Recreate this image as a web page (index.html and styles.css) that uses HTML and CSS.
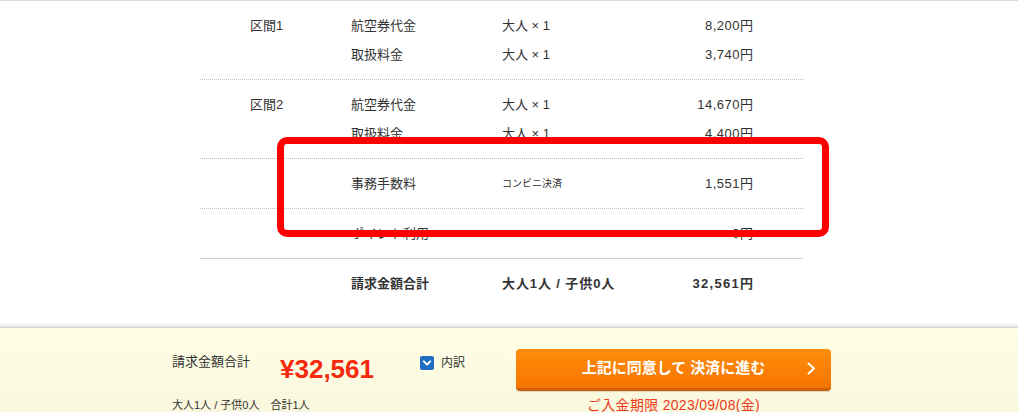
FILE: index.html
```html
<!DOCTYPE html>
<html lang="ja">
<head>
<meta charset="utf-8">
<title>お支払い内容</title>
<link rel="stylesheet" href="styles.css">
</head>
<body>
<main class="content">
  <div class="breakdown">
    <div class="group">
      <div class="row"><span class="sec">区間1</span><span>航空券代金</span><span>大人 × 1</span><span class="price">8,200円</span></div>
      <div class="row"><span class="sec"></span><span>取扱料金</span><span>大人 × 1</span><span class="price">3,740円</span></div>
    </div>
    <div class="group">
      <div class="row"><span class="sec">区間2</span><span>航空券代金</span><span>大人 × 1</span><span class="price">14,670円</span></div>
      <div class="row"><span class="sec"></span><span>取扱料金</span><span>大人 × 1</span><span class="price">4,400円</span></div>
    </div>
    <div class="group">
      <div class="row"><span class="sec"></span><span>事務手数料</span><span class="small">コンビニ決済</span><span class="price">1,551円</span></div>
    </div>
    <div class="group solid">
      <div class="row"><span class="sec"></span><span>ポイント利用</span><span></span><span class="price">0円</span></div>
    </div>
    <div class="group total">
      <div class="row"><span class="sec"></span><span>請求金額合計</span><span class="wide">大人1人 / 子供0人</span><span class="price">32,561円</span></div>
    </div>
  </div>
  <div class="highlight"></div>
</main>
<footer class="footer">
  <div class="footer-inner">
    <div class="summary">
      <div class="summary-row">
        <span class="sum-label">請求金額合計</span>
        <span class="sum-price">¥32,561</span>
        <span class="toggle">
          <svg class="check" width="14" height="14" viewBox="0 0 14 14"><rect x="0" y="0" width="14" height="14" rx="2" fill="#1f6ec2"/><path d="M3.8 5.4 L7 8.6 L10.2 5.4" fill="none" stroke="#fff" stroke-width="2" stroke-linecap="round" stroke-linejoin="round"/></svg>
          <span class="toggle-label">内訳</span>
        </span>
      </div>
      <div class="sum-sub">大人1人 / 子供0人　合計1人</div>
    </div>
    <div class="action">
      <button class="cta" type="button">上記に同意して 決済に進む
        <svg class="cta-arrow" width="9" height="13" viewBox="0 0 9 13"><path d="M1.5 1.5 L7 6.5 L1.5 11.5" fill="none" stroke="#fff" stroke-width="2" stroke-linecap="round" stroke-linejoin="round"/></svg>
      </button>
      <div class="deadline">ご入金期限 2023/09/08(金)</div>
    </div>
  </div>
</footer>
</body>
</html>
```

FILE: styles.css
```css
html, body {
  margin: 0;
  padding: 0;
  overflow: hidden;
  height: 412px;
}
body {
  font-family: "Liberation Sans", "Noto Sans CJK JP", sans-serif;
  color: #333;
  background: #fff;
}
.content {
  position: relative;
  border-top: 1px solid #dcdcdc;
  height: 326px;
}
.breakdown {
  margin-left: 200px;
  width: 603px;
}
.group {
  padding: 10px 0;
  border-bottom: 1px dotted #bdbdbd;
}
.group.solid {
  border-bottom: 1px solid #cfcfcf;
}
.group.total {
  border-bottom: none;
  font-weight: bold;
}
.row {
  display: grid;
  grid-template-columns: 101px 151px 1fr auto;
  padding: 0 50px;
  height: 29px;
  align-items: center;
  font-size: 13px;
  line-height: 29px;
}
.price {
  text-align: right;
  letter-spacing: 0.5px;
  margin-right: -0.5px;
}
.group.total .price {
  letter-spacing: 1.3px;
  margin-right: -1.3px;
}
.wide {
  letter-spacing: 0.9px;
}
.small {
  font-size: 10px;
}
.highlight {
  position: absolute;
  left: 277px;
  top: 136px;
  width: 538px;
  height: 86px;
  border: 7px solid #ff0000;
  border-radius: 10px;
}
.footer {
  position: relative;
  border-top: 1px solid #d4d4d4;
  box-shadow: 0 -2px 3px rgba(0, 0, 0, 0.12);
  background: linear-gradient(#fffee6, #f9f7dc);
  height: 90px;
}
.footer-inner {
  display: flex;
  padding: 21px 0 0 172px;
}
.summary {
  width: 344px;
}
.summary-row {
  display: flex;
  align-items: flex-start;
  height: 40px;
}
.sum-label {
  width: 108px;
  font-size: 13px;
  line-height: 20px;
  margin-top: 3px;
}
.sum-price {
  width: 140px;
  font-size: 26px;
  line-height: 30px;
  margin-top: 5px;
  font-weight: bold;
  color: #f5290c;
}
.toggle {
  display: flex;
  align-items: center;
  gap: 7px;
  margin-top: 7px;
}
.check {
  display: block;
}
.toggle-label {
  font-size: 12px;
  line-height: 14px;
}
.sum-sub {
  margin-top: 8px;
  font-size: 11px;
  line-height: 16px;
}
.action {
  width: 315px;
}
.cta {
  position: relative;
  display: block;
  width: 315px;
  height: 42px;
  margin: 0;
  padding: 0 0 1px;
  border: none;
  border-bottom: 3px solid #cc5f00;
  border-radius: 4px;
  background: linear-gradient(#ff8d0a, #f67500);
  color: #fff;
  font-family: "Liberation Sans", "Noto Sans CJK JP", sans-serif;
  font-size: 15px;
  font-weight: bold;
  line-height: 38px;
  text-align: center;
  box-shadow: 0 1px 1px rgba(0, 0, 0, 0.15);
}
.cta-arrow {
  position: absolute;
  right: 15px;
  top: 13px;
}
.deadline {
  margin-top: 4px;
  text-align: center;
  font-size: 14px;
  line-height: 20px;
  letter-spacing: 0.3px;
  color: #ee3a22;
}
```
